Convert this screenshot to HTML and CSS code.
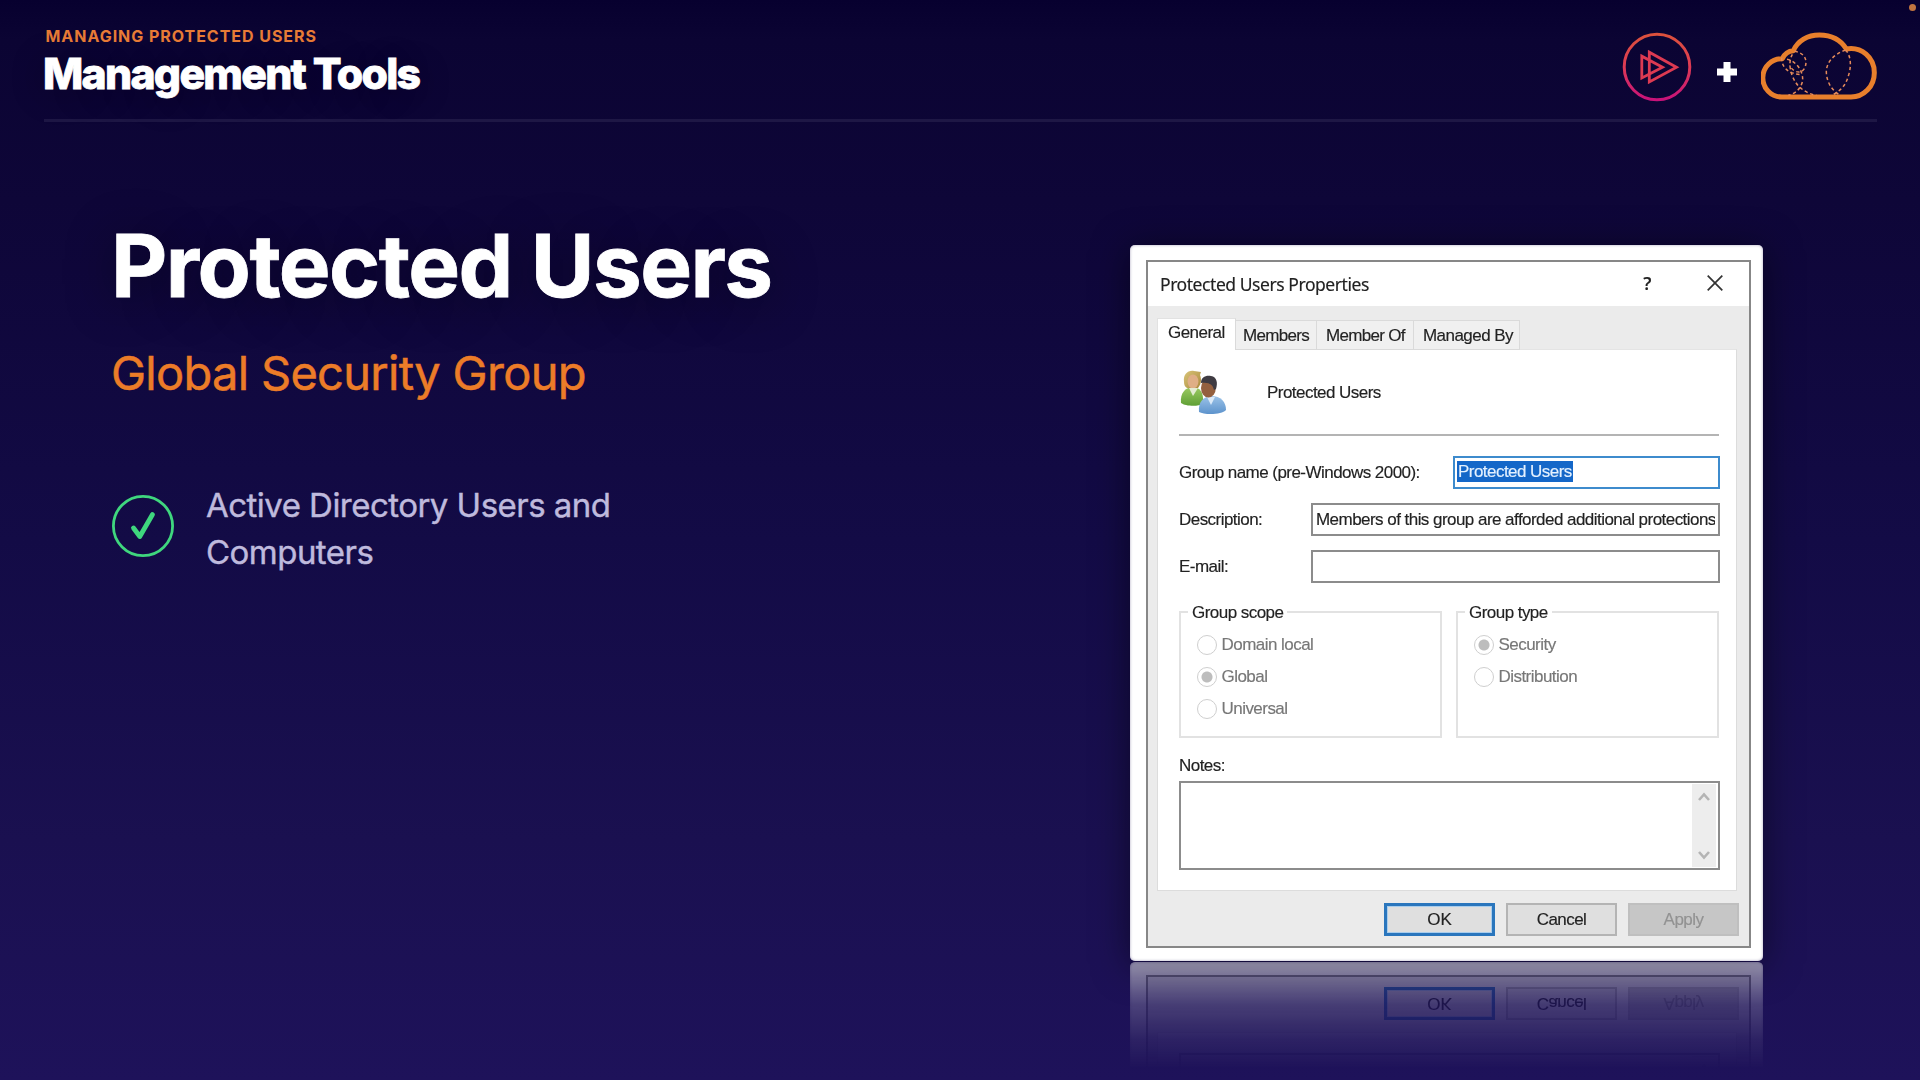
FILE: index.html
```html
<!DOCTYPE html>
<html lang="en">
<head>
<meta charset="utf-8">
<title>Management Tools</title>
<link rel="stylesheet" href="styles.css">
</head>
<body>
<div class="slide">
  <header class="header">
    <div>
      <p class="eyebrow">MANAGING PROTECTED USERS</p>
      <h1 class="title">Management Tools</h1>
    </div>
    <div class="logos">
      <svg class="play-logo" viewBox="0 0 70 70" fill="none" stroke="url(#play)">
        <defs><linearGradient id="play" gradientUnits="userSpaceOnUse" x1="0" y1="2" x2="0" y2="68"><stop offset="0" stop-color="#dc513c"/><stop offset=".5" stop-color="#dd3a55"/><stop offset="1" stop-color="#c8127a"/></linearGradient></defs>
        <circle cx="35" cy="35" r="32.8" stroke-width="3"/>
        <path d="M19.8 24.2V46L40.5 35.2Z M27.3 20.2V50L54.5 35.2Z" stroke="#dd3a52" stroke-width="2.8"/>
      </svg>
      <svg class="plus" viewBox="0 0 20 20"><path d="M6.5 0h7v6.5H20v7h-6.5V20h-7v-6.5H0v-7h6.5z" fill="#fff"/></svg>
      <svg class="cloud-logo" viewBox="18 15 351 207" fill="none" stroke="#e87f2c">
        <path stroke-width="15" stroke-linejoin="round" d="M80 213A57 57 0 0 1 82 98C88 85 100 75 115 74C128 44 158 27 193 27C230 27 258 43 274 69C320 61 358 95 358 140C358 182 326 213 288 213Z"/>
        <g stroke-width="4.5" stroke-dasharray="10 8" stroke="#e58a5a">
          <path d="M272 72C235 85 213 110 214 140C216 170 230 192 254 207"/>
          <path d="M272 72C288 90 290 120 280 150C272 180 255 195 232 207"/>
          <path d="M80 95C80 125 100 143 138 146"/>
          <path d="M118 76C150 80 160 105 148 128C138 145 115 140 104 118"/>
          <path d="M96 100C125 105 148 140 142 168C136 190 120 203 100 208"/>
          <path d="M112 85C98 110 105 150 130 180C145 195 165 205 184 208"/>
        </g>
      </svg>
    </div>
  </header>
  <main class="content">
    <section class="copy">
      <h2 class="heading">Protected Users</h2>
      <p class="subheading">Global Security Group</p>
      <ul class="checks">
        <li class="check">
          <svg class="check-icon" viewBox="0 0 62 62" fill="none" stroke="#3fd77e">
            <circle cx="31" cy="31" r="29.6" stroke-width="2.8"/>
            <path d="M21.5 33L27.8 41.5L40.5 19.5" stroke-width="4.8" stroke-linecap="round" stroke-linejoin="round"/>
          </svg>
          <span>Active Directory Users and<br>Computers</span>
        </li>
      </ul>
    </section>
    <div class="shadow">
      <div class="card">
        <div class="dialog">
          <div class="titlebar">
            <span class="caption">Protected Users Properties</span>
            <span class="help">?</span>
            <svg class="close" viewBox="0 0 16 16" fill="none" stroke="#333" stroke-width="1.7"><path d="M.7.7L15.3 15.3M15.3.7L.7 15.3"/></svg>
          </div>
          <nav class="tabs">
            <span class="tab tab-active">General</span>
            <span class="tab tab-members">Members</span>
            <span class="tab tab-memberof">Member Of</span>
            <span class="tab tab-managed">Managed By</span>
          </nav>
          <div class="panel">
            <div class="identity">
              <svg class="people" viewBox="0 0 48 46">
                <defs>
                  <linearGradient id="green" x2="0" y2="1"><stop offset="0" stop-color="#9ccb62"/><stop offset="1" stop-color="#5f9f35"/></linearGradient>
                  <linearGradient id="blue" x2="0" y2="1"><stop offset="0" stop-color="#9cc3e8"/><stop offset="1" stop-color="#5d93cc"/></linearGradient>
                  <linearGradient id="hair" x2="1" y2="1"><stop offset="0" stop-color="#d9c478"/><stop offset="1" stop-color="#a9883c"/></linearGradient>
                </defs>
                <path d="M2 33C1 23 6 18 13 17C21 17 25 22 24 34C18 37 6 36 2 33Z" fill="url(#green)"/>
                <path d="M5 12C4 4 9 0 15 1L22 2L21 5C23 10 22 15 18 19L8 18C6 17 5 15 5 12Z" fill="url(#hair)"/>
                <ellipse cx="14" cy="11.5" rx="5.4" ry="7" fill="#dfae86"/>
                <path d="M10 18L14 26L19 18Z" fill="#e3ecd2"/>
                <path d="M20 42C19 32 24 27 32 26C42 26 47 32 47 40C43 45 25 45 20 42Z" fill="url(#blue)"/>
                <path d="M28 27L32 35L36 27Z" fill="#dceaf8"/>
                <ellipse cx="29.4" cy="18" rx="7.4" ry="9.6" fill="#94603f"/>
                <path d="M22 13C22 7 27 5 32 6C38 7 39 13 37 19L35 20C34 15 31 12 22 13Z" fill="#3f3b42"/>
              </svg>
              <span>Protected Users</span>
            </div>
            <div class="rule"></div>
            <div class="row"><label class="label">Group name (pre-Windows 2000):</label><div class="field field-focus"><span class="selection">Protected Users</span></div></div>
            <div class="row"><label class="label">Description:</label><div class="field field-wide"><div class="value">Members of this group are afforded additional protections</div></div></div>
            <div class="row"><label class="label">E-mail:</label><div class="field field-wide"></div></div>
            <div class="groups">
              <fieldset class="group">
                <legend>Group scope</legend>
                <div class="option"><i class="radio"></i>Domain local</div>
                <div class="option"><i class="radio radio-on"></i>Global</div>
                <div class="option"><i class="radio"></i>Universal</div>
              </fieldset>
              <fieldset class="group">
                <legend>Group type</legend>
                <div class="option"><i class="radio radio-on"></i>Security</div>
                <div class="option"><i class="radio"></i>Distribution</div>
              </fieldset>
            </div>
            <div class="notes-label">Notes:</div>
            <div class="notes">
              <div class="scrollbar">
                <svg viewBox="0 0 12 10" fill="none" stroke="#b4b4b4" stroke-width="2.6"><path d="M1 8L6 2.5L11 8"/></svg>
                <svg viewBox="0 0 12 10" fill="none" stroke="#b4b4b4" stroke-width="2.6"><path d="M1 2L6 7.5L11 2"/></svg>
              </div>
            </div>
          </div>
          <div class="actions">
            <span class="button button-default">OK</span>
            <span class="button">Cancel</span>
            <span class="button button-disabled">Apply</span>
          </div>
        </div>
      </div>
    </div>
  </main>
  <i class="dot"></i>
</div>
</body>
</html>
```
FILE: styles.css
```css
* { box-sizing: border-box; }
html, body { margin: 0; height: 1080px; overflow: hidden; }
p, h1, h2, ul { margin: 0; padding: 0; }
svg { display: block; flex: none; }

.slide {
  position: relative;
  width: 1920px;
  height: 1080px;
  overflow: hidden;
  font-family: Inter, sans-serif;
  background: linear-gradient(#07002f 0, #0b0433 40px, #0e0638 200px, #130b46 540px, #1a1050 840px, #1e125a 1080px);
}

/* Header */
.header {
  display: flex;
  justify-content: space-between;
  height: 122px;
  margin: 0 43px 0 44px;
  padding-top: 26px;
  border-bottom: 3px solid #1e1745;
}
.eyebrow {
  padding-left: 1.5px;
  font-size: 16px;
  font-weight: 700;
  line-height: 20px;
  letter-spacing: 0.96px;
  color: #e87b36;
}
.title {
  margin-top: 2px;
  margin-left: -1px;
  font-size: 42.7px;
  font-weight: 800;
  line-height: 52px;
  letter-spacing: -1.7px;
  color: #fff;
  -webkit-text-stroke: 0.8px #fff;
  text-shadow: 0 4px 34px rgba(0, 0, 0, .3);
}
.logos { display: flex; align-items: flex-start; }
.play-logo { width: 70px; height: 70px; margin: 5.5px 1px 0 0; }
.plus { width: 20px; height: 20px; margin: 36px 24px 0; }
.cloud-logo { width: 117px; height: 69px; margin: 4.5px -1px 0 0; }

/* Content */
.content {
  display: flex;
  justify-content: space-between;
  padding: 91.5px 157px 0 111px;
}
.heading {
  font-size: 87px;
  font-weight: 700;
  line-height: 104px;
  letter-spacing: -1.55px;
  color: #fff;
  -webkit-text-stroke: 0.8px #fff;
  text-shadow: 0 6px 50px rgba(0, 0, 0, .45);
}
.subheading {
  margin-top: 26px;
  font-size: 47px;
  line-height: 58px;
  letter-spacing: -0.7px;
  color: #ec7c28;
  -webkit-text-stroke: 0.5px #ec7c28;
}
.checks { margin-top: 80.5px; list-style: none; }
.check {
  display: flex;
  gap: 32px;
  padding-left: 1px;
  font-size: 33px;
  line-height: 46.8px;
  letter-spacing: -0.53px;
  color: #bfbadd;
  -webkit-text-stroke: 0.4px #bfbadd;
}
.check-icon { width: 62px; height: 62px; margin-top: 12.5px; }

/* Card with its reflection */
.shadow {
  height: 716px;
  margin-top: 31.5px;
  border-radius: 5px;
  box-shadow: 0 4px 36px rgba(0, 0, 0, .5);
}
.card {
  width: 633px;
  height: 716px;
  padding: 15px 12px 13px 16px;
  border-radius: 5px;
  background: #fff;
  box-shadow: inset 0 0 3px #a9a4bd;
  -webkit-box-reflect: below 1px linear-gradient(to top, rgba(255, 255, 255, .5) 0, rgba(255, 255, 255, .47) 8px, rgba(255, 255, 255, .21) 42px, rgba(255, 255, 255, .07) 78px, transparent 108px);
}
.dialog {
  display: flex;
  flex-direction: column;
  height: 688px;
  border: 2px solid #878787;
  background: #ebebeb;
  font: 17px/20px "Liberation Sans", sans-serif;
  letter-spacing: -0.54px;
  color: #222;
  -webkit-text-stroke: 0.15px;
  white-space: nowrap;
}
.titlebar {
  display: flex;
  align-items: center;
  height: 44px;
  padding: 0 26px 0 12px;
  background: #fff;
}
.caption {
  flex: 1;
  font: 17.5px/24px "Noto Sans", sans-serif;
  letter-spacing: -0.44px;
}
.help { font: 600 18px/24px "Open Sans", sans-serif; margin: -2px 56px 0 0; }
.close { width: 16px; height: 16px; margin-top: -2px; }

.tabs {
  display: flex;
  align-items: flex-end;
  position: relative;
  height: 44px;
  margin-bottom: -1px;
  padding-left: 9px;
}
.tab {
  height: 30px;
  padding: 5px 0 0 7px;
  border: 1px solid #dadada;
  border-left: 0;
  background: #f0f0f0;
}
.tab-active {
  width: 79px;
  height: 32px;
  padding: 4px 0 0 10px;
  border: 1px solid #e2e2e2;
  border-bottom: 0;
  border-right-color: #dadada;
  background: #fff;
}
.tab-members { width: 81px; letter-spacing: -0.7px; }
.tab-memberof { width: 97px; padding-left: 9px; letter-spacing: -0.68px; }
.tab-managed { width: 106px; padding-left: 9px; }

.panel {
  width: 580px;
  height: 542px;
  margin-left: 9px;
  padding: 21px 16px 0 21px;
  border: 1px solid #dcdcdc;
  border-top-color: #e4e4e4;
  background: #fff;
}
.identity { display: flex; align-items: center; gap: 40px; height: 43px; }
.people { width: 48px; height: 46px; margin-top: 1px; }
.rule { height: 2px; margin: 20px 1px 20px 0; background: #b4b4b4; }
.row {
  display: flex;
  align-items: center;
  justify-content: space-between;
  height: 33px;
  margin-bottom: 14px;
}
.field {
  width: 267px;
  height: 33px;
  padding: 5px 3px;
  border: 2px solid #8c8c8c;
}
.field-wide { width: 409px; }
.value { overflow: hidden; }
.field-focus { padding: 3px 2px; border-color: #3d8bcd; }
.selection { display: inline-block; height: 21px; padding: 1px 1px 0; background: #1467c8; color: #e4f1ff; }

.groups { display: flex; gap: 14px; margin-top: 19px; }
.group {
  width: 263px;
  height: 136px;
  margin: 0;
  padding: 7px 0 0 16px;
  border: 2px solid #e2e2e2;
}
.group legend { position: relative; top: 1px; height: 20px; margin-left: -9px; padding: 0 4px; }
.option { display: flex; align-items: center; gap: 4.5px; height: 32px; color: #777; }
.radio { width: 20px; height: 20px; border: 1.5px solid #cfcfcf; border-radius: 50%; }
.radio-on { background: radial-gradient(circle, #bdbdbd 5px, transparent 6px); }

.notes-label { margin-top: 18px; }
.notes {
  display: flex;
  justify-content: flex-end;
  height: 89px;
  margin-top: 5px;
  padding: 1px 2px;
  border: 2px solid #8c8c8c;
}
.scrollbar {
  display: flex;
  flex-direction: column;
  align-items: center;
  justify-content: space-between;
  width: 24px;
  padding: 8px 0 7px;
  background: #ededed;
}
.scrollbar svg { width: 12px; height: 10px; }

.actions { display: flex; gap: 11px; margin: 12px 10px 0 auto; }
.button {
  width: 111px;
  height: 33px;
  border: 2px solid #b4b4b4;
  background: #dfdfdf;
  text-align: center;
  line-height: 29px;
}
.button-default { border: 3px solid #2a76bd; line-height: 27px; letter-spacing: 0; box-shadow: inset 0 0 0 1px #a9cdec; }
.button-disabled { border-color: #bfbfbf; background: #c6c6c6; color: #929292; }

.dot {
  position: absolute;
  top: 4px;
  right: 4px;
  width: 7px;
  height: 7px;
  border-radius: 50%;
  background: #c07440;
}
```
